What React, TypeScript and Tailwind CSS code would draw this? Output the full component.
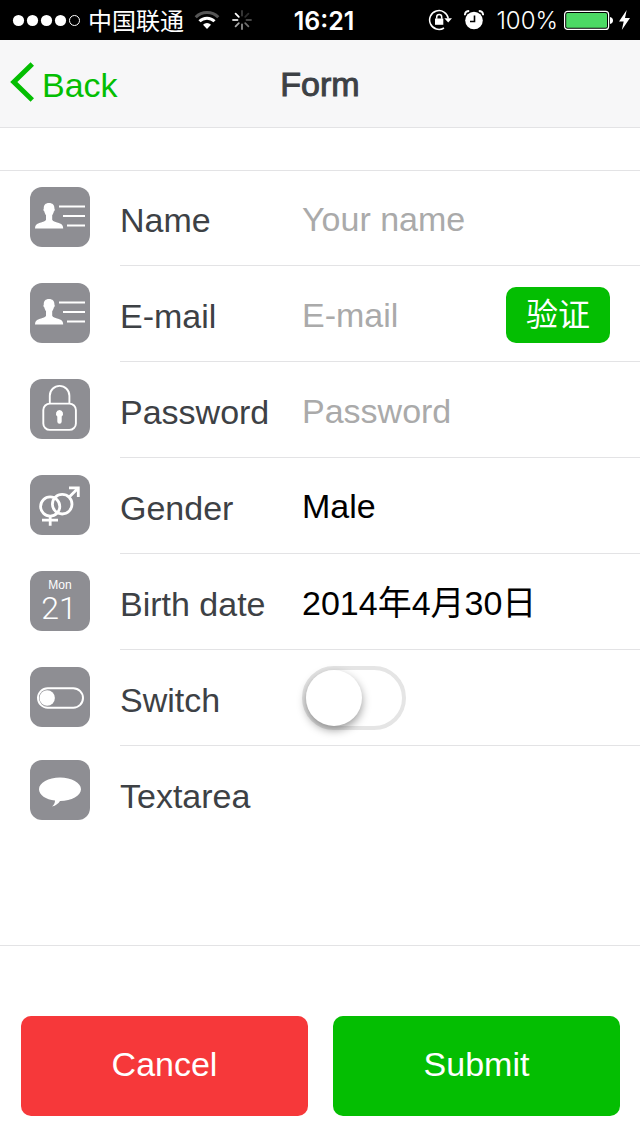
import type { ReactNode } from 'react';

const fieldText =
  "min-w-0 flex-1 appearance-none bg-transparent text-[34px] text-black outline-none placeholder:text-[#aaaaaa]";

function Tile({ children }: { children: ReactNode }) {
  return (
    <svg viewBox="0 0 60 60" className="size-[60px] shrink-0 rounded-xl bg-[#8e8e93]" fill="none" stroke="#fff" aria-hidden="true">
      {children}
    </svg>
  );
}

function PersonIcon() {
  return (
    <Tile>
      <path
        fill="#fff"
        stroke="none"
        d="M19 16c3.600 0 5.600 2.200 5.400 5.400.7.600.4 2.400-.6 3.200-.3 1.700-.9 2.700-1.600 3.600v4.600c.7 1.800 4 2.400 7.200 3.400 2.800 1 3.800 2.500 3.800 5.300H5c0-2.800 1-4.300 3.800-5.300 3.200-1 6.500-1.600 7.200-3.400v-4.600c-.7-.9-1.300-1.900-1.600-3.600-1-.8-1.300-2.600-.6-3.200C13.600 18.200 15.400 16 19 16z"
      />
      <path strokeWidth="2" d="M29 19.500h26M33 29h22M37 38.500h18" />
    </Tile>
  );
}

function LockIcon() {
  return (
    <Tile>
      <path strokeWidth="1.900" d="M19.800 24v-7.300a9.800 9.800 0 0 1 19.600 0V24" />
      <rect x="13.300" y="24.600" width="32.600" height="26.300" rx="6.500" strokeWidth="1.900" />
      <path fill="#fff" stroke="none" d="M29.500 31a3.600 3.600 0 0 1 2.200 6.400v5.100a2.200 2.200 0 0 1-4.400 0v-5.100A3.600 3.600 0 0 1 29.500 31z" />
    </Tile>
  );
}

function GenderIcon() {
  return (
    <Tile>
      <g strokeWidth="2.800">
        <circle cx="20.200" cy="31.500" r="9.600" />
        <circle cx="32.200" cy="29.200" r="9.800" />
        <path d="M20.200 41v9.700M12 45.200h16M39 22.300l9-9M39 12.800h9.300v9.200" />
      </g>
    </Tile>
  );
}

function DateIcon() {
  return (
    <Tile>
      <text x="30" y="18" textAnchor="middle" fill="#fff" stroke="none" className="text-[12px]">
        Mon
      </text>
      <text x="29" y="48" textAnchor="middle" fill="#fff" stroke="none" className="font-[Roboto,sans-serif] text-[32px] font-light">
        21
      </text>
    </Tile>
  );
}

function SwitchIcon() {
  return (
    <Tile>
      <rect x="8" y="21.300" width="45" height="19.400" rx="9.700" strokeWidth="2" />
      <circle cx="17.200" cy="31" r="7.700" fill="#fff" stroke="none" />
    </Tile>
  );
}

function BubbleIcon() {
  return (
    <Tile>
      <path
        fill="#fff"
        stroke="none"
        d="M30 17.500c11.600 0 21 5.200 21 11.700S41.600 40.900 30 41c-1.300 2.400-4.200 4.700-8 5.600 2-1.700 3-3.700 3-6C15.800 39.500 9 34.800 9 29.200 9 22.700 18.400 17.500 30 17.500z"
      />
    </Tile>
  );
}

function Row({ icon, label, id, children }: { icon: ReactNode; label: string; id: string; children: ReactNode }) {
  return (
    <li className="flex h-24 items-start gap-[30px] pl-[30px]">
      <div className="pt-[17px]">{icon}</div>
      <div className="flex h-full min-w-0 flex-1 items-center border-b border-[#e3e3e5] pr-[30px]">
        <label htmlFor={id} className="w-[182px] shrink-0 pt-1 whitespace-nowrap">
          {label}
        </label>
        {children}
      </div>
    </li>
  );
}

function StatusBar() {
  return (
    <div className="grid h-10 grid-cols-[1fr_auto_1fr] items-center bg-black text-white">
      <div className="flex items-center pl-3">
        <svg width="70" height="14" viewBox="0 0 70 14" fill="#fff" aria-hidden="true">
          <circle cx="6.500" cy="7.500" r="5.600" />
          <circle cx="20.500" cy="7.500" r="5.600" />
          <circle cx="34.500" cy="7.500" r="5.600" />
          <circle cx="48.500" cy="7.500" r="5.600" />
          <circle cx="62.500" cy="7.500" r="5" fill="none" stroke="#fff" />
        </svg>
        <span className="ml-1.5 font-['Noto_Sans_CJK_SC',sans-serif] text-[24px] leading-10 font-normal">中国联通</span>
        <svg className="ml-2.5" width="26" height="20" viewBox="0 0 26 20" fill="none" strokeWidth="3" aria-hidden="true">
          <path stroke="#555" d="M1.700 7.200a16 16 0 0 1 22.600 0" />
          <path stroke="#fff" d="M5.500 11.300a10.600 10.600 0 0 1 15 0" />
          <path fill="#fff" d="M13 19l-4-4.300a5.700 5.700 0 0 1 8 0z" />
        </svg>
        <svg className="ml-3" width="20" height="20" viewBox="0 0 20 20" fill="none" strokeWidth="1.800" strokeLinecap="round" aria-hidden="true">
          <path stroke="#3c3c3c" d="M10 1v4.500" />
          <path stroke="#2c2c2c" d="M16.400 3.600l-3.200 3.200" />
          <path stroke="#484848" d="M19 10h-4.500" />
          <path stroke="#707070" d="M16.400 16.400l-3.200-3.200" />
          <path stroke="#8c8c8c" d="M10 19v-4.500" />
          <path stroke="#aaa" d="M3.600 16.400l3.200-3.200" />
          <path stroke="#ccc" d="M1 10h4.500" />
          <path stroke="#fff" d="M3.600 3.600l3.200 3.200" />
        </svg>
      </div>
      <time className="pt-0.5 pl-2 font-[Inter,sans-serif] text-[25px] leading-[38px] font-semibold">16:21</time>
      <div className="flex items-center justify-end pr-2">
        <svg width="24" height="22" viewBox="0 0 24 22" fill="none" stroke="#fff" aria-hidden="true">
          <path strokeWidth="1.500" d="M20.300 9.500A9.400 9.400 0 1 0 16 19" />
          <path fill="#fff" stroke="none" d="M16.300 9.300H24l-3.800 4.300z" />
          <path fill="#fff" stroke="none" d="M7 9.500h8.300v6.300H7z" />
          <path strokeWidth="1.500" d="M8.700 9.800V8a2.500 2.500 0 0 1 5 0v1.800" />
        </svg>
        <svg className="ml-3" width="20" height="20" viewBox="0 0 20 20" aria-hidden="true">
          <circle cx="10" cy="10.500" r="8.800" fill="#fff" />
          <path d="M10.500 5.500v6H6" stroke="#000" strokeWidth="1.600" fill="none" />
          <path d="M.8 5.200C1 2.500 2.700 1 5.200 1M19.200 5.200C19 2.500 17.300 1 14.800 1" stroke="#fff" strokeWidth="1.800" fill="none" />
        </svg>
        <span className="ml-3 pt-0.5 font-[Inter,sans-serif] text-[24px] leading-[38px] font-light">100%</span>
        <svg className="ml-1.5" width="50" height="20" viewBox="0 0 50 20" aria-hidden="true">
          <rect x=".6" y="1.400" width="44" height="18" rx="3" fill="none" stroke="#fff" strokeWidth="1.200" />
          <rect x="2.200" y="3" width="40.800" height="14.800" rx="1.500" fill="#4cd964" />
          <path d="M46 7c2 .5 3 1.700 3 3.500s-1 3-3 3.500z" fill="#fff" />
        </svg>
        <svg className="ml-1" width="14" height="20" viewBox="0 0 14 20" fill="#fff" aria-hidden="true">
          <path d="M8.700 0L1 11.500h4.700L3.800 20 12 8H7z" />
        </svg>
      </div>
    </div>
  );
}

export default function App() {
  return (
    <div className="min-h-screen bg-white font-['Liberation_Sans','Noto_Sans_CJK_SC',sans-serif] text-[34px] leading-[42px] text-[#3d4145]">
      <StatusBar />
      <header className="grid h-[88px] grid-cols-[1fr_auto_1fr] items-center border-b border-[#e3e3e5] bg-[#f7f7f8]">
        <a href="#back" className="flex items-start gap-2 pl-2.5 text-[#04be02]">
          <svg width="24" height="40" viewBox="0 0 24 40" fill="none" stroke="currentColor" strokeWidth="5" aria-hidden="true">
            <path d="M22.300 2L3.800 20l18.500 18" />
          </svg>
          <span className="pt-0.5">Back</span>
        </a>
        <h1 className="[-webkit-text-stroke:1px_#3d4145]">Form</h1>
      </header>

      <form onSubmit={(event) => event.preventDefault()}>
        <ul className="mt-[42px] shadow-[inset_0_1px_#e3e3e5,inset_0_-1px_#e3e3e5]">
          <Row icon={<PersonIcon />} label="Name" id="name">
            <input id="name" type="text" placeholder="Your name" className={`${fieldText} pt-0.5`} />
          </Row>
          <Row icon={<PersonIcon />} label="E-mail" id="email">
            <input id="email" type="email" placeholder="E-mail" className={`${fieldText} pt-0.5`} />
            <button
              type="button"
              className="mt-0.5 h-14 shrink-0 rounded-[10px] bg-[#04be02] px-5 text-[32px] text-white"
            >
              验证
            </button>
          </Row>
          <Row icon={<LockIcon />} label="Password" id="password">
            <input id="password" type="password" placeholder="Password" className={`${fieldText} pt-0.5`} />
          </Row>
          <Row icon={<GenderIcon />} label="Gender" id="gender">
            <select id="gender" defaultValue="Male" className={fieldText}>
              <option>Male</option>
              <option>Female</option>
            </select>
          </Row>
          <Row icon={<DateIcon />} label="Birth date" id="birth">
            <input id="birth" type="text" defaultValue="2014年4月30日" className={`${fieldText} pt-0.5`} />
          </Row>
          <Row icon={<SwitchIcon />} label="Switch" id="switch">
            <input
              id="switch"
              type="checkbox"
              role="switch"
              className="h-16 w-[104px] appearance-none rounded-full border-4 border-[#e5e5e5] bg-white before:block before:size-14 before:rounded-full before:bg-white before:shadow-[0_4px_10px_rgba(0,0,0,0.4)] checked:border-[#04be02] checked:bg-[#04be02] checked:before:ml-10"
            />
          </Row>
          <li className="flex h-[200px] items-start gap-[30px] pt-3.5 pr-[30px] pl-[30px]">
            <BubbleIcon />
            <div className="flex min-w-0 flex-1 items-start pt-[15px]">
              <label htmlFor="notes" className="w-[182px] shrink-0">
                Textarea
              </label>
              <textarea id="notes" className="h-[150px] min-w-0 flex-1 resize-none bg-transparent text-black outline-none" />
            </div>
          </li>
        </ul>

        <div className="grid grid-cols-2 gap-[25px] pt-[70px] pr-5 pb-5 pl-[21px] text-white">
          <button type="reset" className="h-[100px] rounded-[10px] bg-[#f6383a] pb-1">
            Cancel
          </button>
          <button type="submit" className="h-[100px] rounded-[10px] bg-[#04be02] pb-1">
            Submit
          </button>
        </div>
      </form>
    </div>
  );
}
